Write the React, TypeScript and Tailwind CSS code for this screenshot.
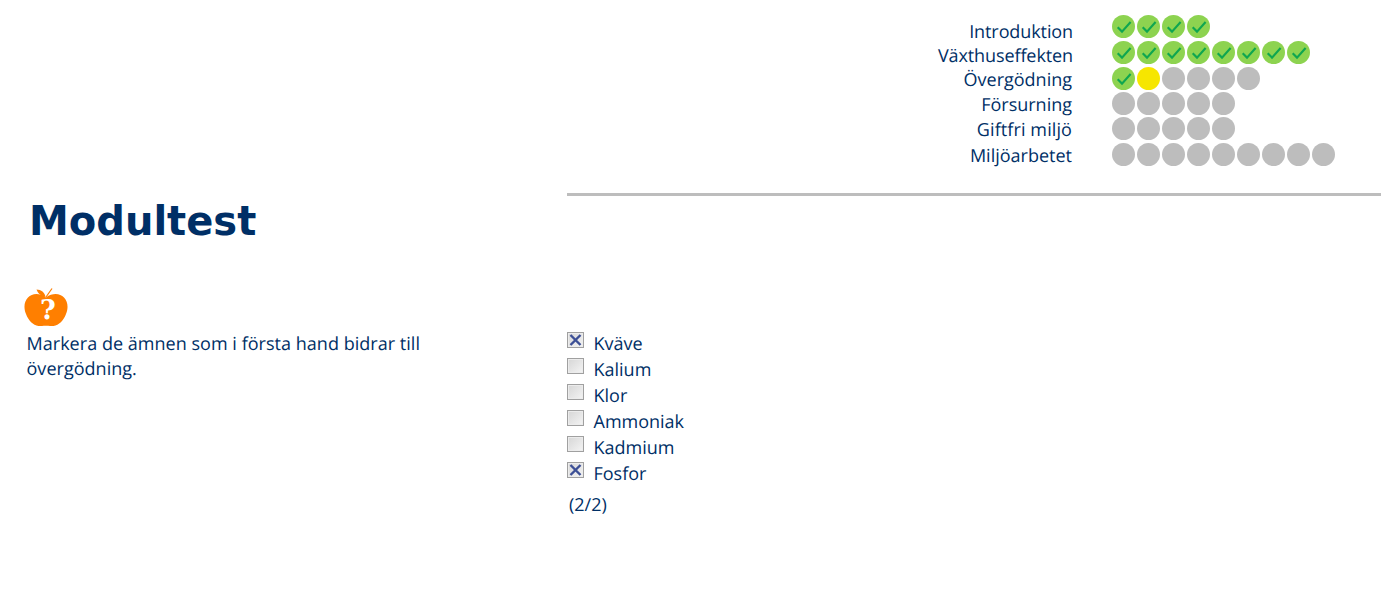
const F = "[font-family:'Open_Sans',sans-serif]";

function Check() {
  return (
    <svg viewBox="0 0 23 23" className="w-[23px] h-[23px] block">
      <circle cx="11.5" cy="11.5" r="11.5" fill="#8dd350" />
      <path d="M5.7 12.2 L10 16.6 L18.6 7" fill="none" stroke="#0fa650" strokeWidth="2.1" />
    </svg>
  );
}

function Dot({ k }: { k: string }) {
  if (k === "c") return <Check />;
  if (k === "y") return <div className="w-[23px] h-[23px] rounded-full bg-[#f6e600]" />;
  return <div className="w-[23px] h-[23px] rounded-full bg-[#bdbdbd]" />;
}

const rows = [
  { label: "Introduktion", h: "h-[24px]", dots: "cccc", rh: "h-[26px]", pr: "pr-0 tracking-[-0.1px]" },
  { label: "Växthuseffekten", h: "h-[24px]", dots: "cccccccc", rh: "h-[26px]", pr: "pr-0 tracking-[-0.1px]" },
  { label: "Övergödning", h: "h-[25px]", dots: "cyiiii", rh: "h-[25px]", pr: "pr-[1px]" },
  { label: "Försurning", h: "h-[25px]", dots: "iiiii", rh: "h-[26px]", pr: "pr-[1px]" },
  { label: "Giftfri miljö", h: "h-[26px]", dots: "iiiii", rh: "h-[26px]", pr: "pr-[1px] tracking-[0.1px]" },
  { label: "Miljöarbetet", h: "h-[26px]", dots: "iiiiiiiii", rh: "h-[26px]", pr: "pr-[1px]" },
];

function Box({ on }: { on: boolean }) {
  return (
    <div className="relative w-[17px] h-[16px] border border-[#a0a0a0] bg-gradient-to-br from-[#d6d6d6] to-[#f4f4f4] shadow-[inset_0_0_0_1px_#ececec] mt-[1px] shrink-0">
      {on && (
        <svg viewBox="0 0 15 14" className="absolute inset-0 w-[15px] h-[14px]">
          <path d="M2.5 2 L12.5 12 M12.5 2 L2.5 12" stroke="#3c4f96" strokeWidth="2.4" fill="none" />
        </svg>
      )}
    </div>
  );
}

const options: [string, boolean][] = [
  ["Kväve", true],
  ["Kalium", false],
  ["Klor", false],
  ["Ammoniak", false],
  ["Kadmium", false],
  ["Fosfor", true],
];

export default function App() {
  return (
    <div className={`${F} [text-rendering:geometricPrecision] bg-white text-[#002f66] w-[1381px] h-[613px] overflow-hidden text-[18px] leading-[26px]`}>
      <div className="flex pt-[15px] h-[169px]">
        <div className="w-[1073px] flex flex-col items-end pt-[5px] shrink-0">
          {rows.map((r) => (
            <div key={r.label} className={`${r.h} ${r.pr} leading-[25px] whitespace-nowrap`}>{r.label}</div>
          ))}
        </div>
        <div className="ml-[39px] flex flex-col">
          {rows.map((r) => (
            <div key={r.label} className={`${r.rh} flex gap-[2px]`}>
              {r.dots.split("").map((d, i) => (
                <Dot key={i} k={d} />
              ))}
            </div>
          ))}
        </div>
      </div>
      <div className="flex">
        <div className="w-[567px] shrink-0 pl-[29px]">
          <h1 className="font-['DejaVu_Sans',sans-serif] [text-rendering:auto] font-bold text-[40px] leading-[50px] mt-[27px] whitespace-nowrap">Modultest</h1>
        </div>
        <div className="flex-1 h-[3px] mt-[24px] bg-[#bdbdbd]" />
      </div>
      <div className="flex mt-[42px]">
        <div className="w-[567px] shrink-0 pl-[26.5px]">
          <div className="relative w-[44px] h-[38px] -ml-[2.5px]">
            <svg viewBox="0 0 44 38" className="w-[44px] h-[38px] block">
              <path d="M22 9.5 C15 4.5 8 5.5 4 9.5 C0 13.5 -0.5 20 2 26 C5 34 11 39 18 38 C20 37.5 24 37.5 26 38 C33 39 39 34 42 26 C44.5 20 44 13.5 40 9.5 C36 5.5 29 4.5 22 9.5 Z" fill="#ff7f00" />
              <path d="M21.5 9 C18 8.5 14 6 12.5 1.5 C17 1.5 21 4.5 21.5 9 Z" fill="#ff7f00" />
              <path d="M22 9 L28 0.5" stroke="#ff7f00" strokeWidth="1.2" fill="none" />
            </svg>
            <span className="absolute left-[16px] top-[8px] font-['DejaVu_Serif',serif] font-bold text-[27px] leading-[30px] text-white">?</span>
          </div>
          <p className="w-[420px] mt-[6px] leading-[25px] tracking-[0.03px]">Markera de ämnen som i första hand bidrar till övergödning.</p>
        </div>
        <div className="pt-[43px]">
          {options.map(([t, on]) => (
            <div key={t} className="flex items-start h-[26px]">
              <Box on={on} />
              <span className="ml-[9.5px] leading-[26px]">{t}</span>
            </div>
          ))}
          <div className="ml-[2px] mt-[5px]">(2/2)</div>
        </div>
      </div>
    </div>
  );
}
